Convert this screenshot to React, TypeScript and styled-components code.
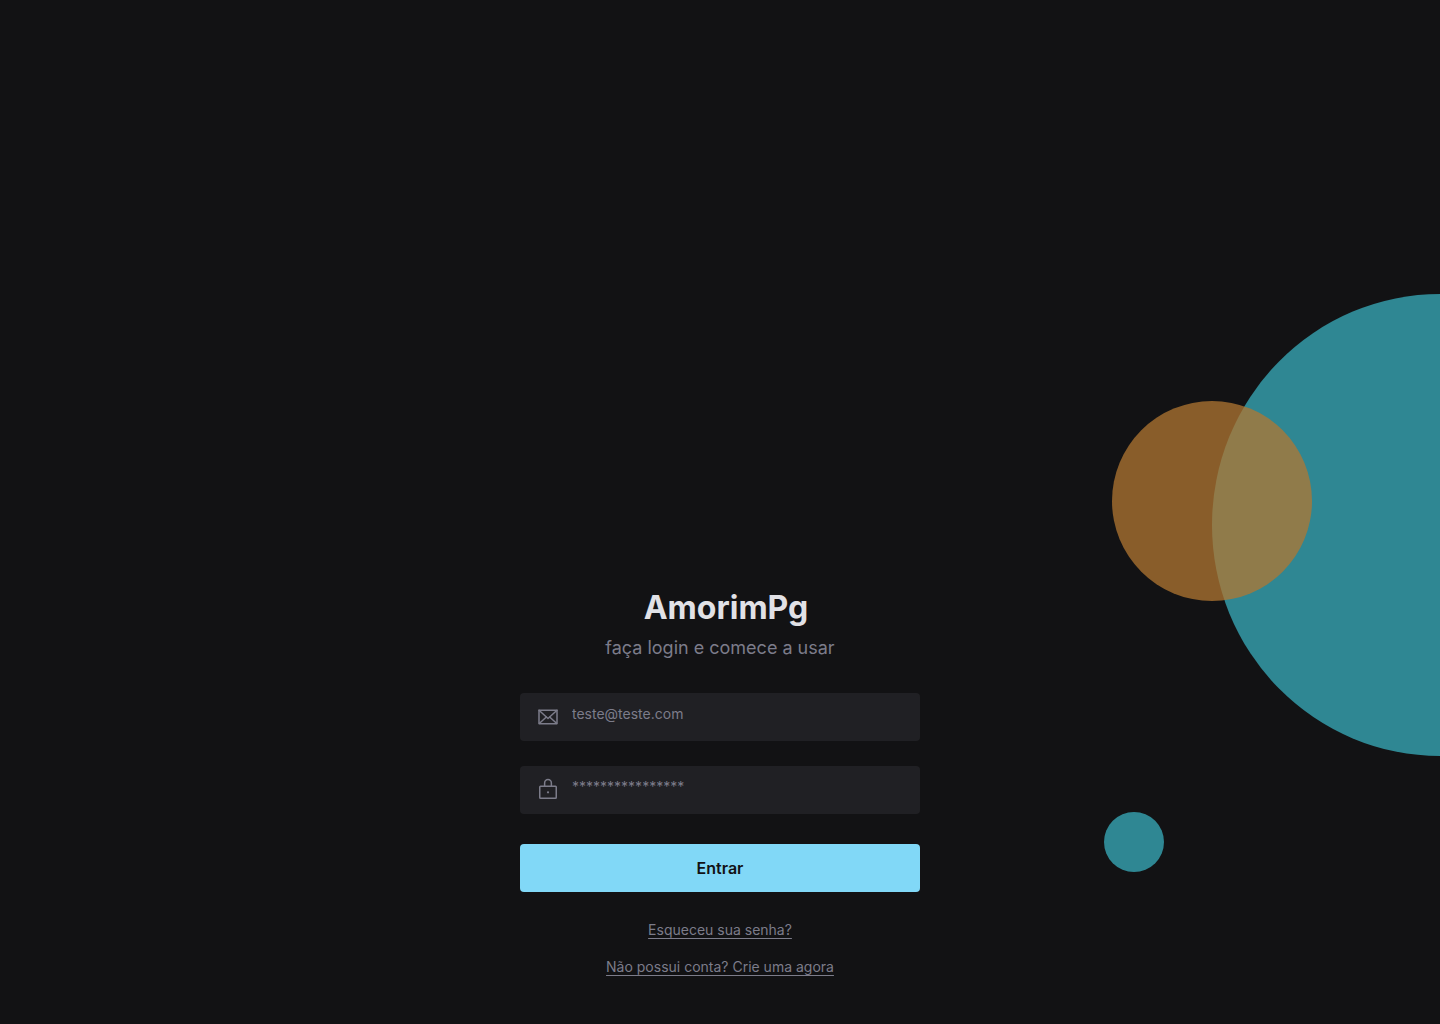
import React from "react";
import styled, { createGlobalStyle } from "styled-components";

const colors = {
  background: "#121214",
  field: "#202024",
  muted: "#7c7c8a",
  heading: "#e1e1e6",
  accent: "#81d8f7",
  teal: "#2f8793",
  orange: "rgba(177, 119, 49, 0.75)",
};

const GlobalStyle = createGlobalStyle`
  * {
    box-sizing: border-box;
    margin: 0;
  }

  body {
    background: ${colors.background};
    color: ${colors.muted};
    font-family: Inter, "Liberation Sans", sans-serif;
    -webkit-font-smoothing: antialiased;
  }
`;

const Page = styled.main`
  position: relative;
  display: flex;
  flex-direction: column;
  align-items: center;
  justify-content: flex-end;
  min-height: 100vh;
  padding: 40px 16px 47px;
  overflow: hidden;
`;

const Backdrop = styled.div`
  position: absolute;
  inset: 0;
  pointer-events: none;
`;

const Bubble = styled.span<{
  $width: number;
  $height: number;
  $top: number;
  $right: number;
  $color: string;
}>`
  position: absolute;
  top: ${(p) => p.$top}px;
  right: ${(p) => p.$right}px;
  width: ${(p) => p.$width}px;
  height: ${(p) => p.$height}px;
  border-radius: 50%;
  background: ${(p) => p.$color};
`;

const Panel = styled.div`
  position: relative;
  display: flex;
  flex-direction: column;
  width: 100%;
  max-width: 400px;
`;

const Header = styled.header`
  display: flex;
  flex-direction: column;
  align-items: center;
  margin-bottom: 31px;
  text-align: center;
`;

const Title = styled.h1`
  padding-left: 12px;
  color: ${colors.heading};
  font-size: 32px;
  font-weight: 700;
  line-height: 40px;
`;

const Subtitle = styled.p`
  margin-top: 6px;
  font-size: 18px;
  line-height: 28px;
`;

const Form = styled.form`
  display: flex;
  flex-direction: column;
`;

const Fields = styled.div`
  display: flex;
  flex-direction: column;
  gap: 25px;
  margin-bottom: 30px;
`;

const Field = styled.label`
  display: flex;
  align-items: center;
  gap: 12px;
  height: 48px;
  padding: 0 16px;
  border-radius: 4px;
  background: ${colors.field};
`;

const Icon = styled.svg`
  flex: none;
  width: 24px;
  height: 24px;
  fill: none;
  stroke: ${colors.muted};
  stroke-width: 16;
  stroke-linecap: round;
  stroke-linejoin: round;
`;

const Input = styled.input`
  flex: 1;
  min-width: 0;
  height: 100%;
  padding: 0 0 7px;
  border: 0;
  outline: 0;
  background: transparent;
  color: ${colors.heading};
  font: inherit;
  font-size: 14px;

  &::placeholder {
    color: ${colors.muted};
    opacity: 1;
  }
`;

const Button = styled.button`
  height: 48px;
  border: 0;
  border-radius: 4px;
  background: ${colors.accent};
  color: ${colors.background};
  font: inherit;
  font-size: 16px;
  font-weight: 600;
  cursor: pointer;
`;

const Links = styled.nav`
  display: flex;
  flex-direction: column;
  align-items: center;
  gap: 17px;
  margin-top: 28px;
`;

const TextLink = styled.a`
  color: inherit;
  font-size: 14px;
  line-height: 20px;
  text-decoration: underline;
  text-decoration-thickness: 1px;
  text-decoration-skip-ink: none;
  text-underline-offset: 3px;
`;

function EnvelopeIcon() {
  return (
    <Icon viewBox="0 0 256 256" aria-hidden="true">
      <path d="M32 56H224V192a8 8 0 0 1-8 8H40a8 8 0 0 1-8-8Z" />
      <path d="M224 56 128 144 32 56" />
      <path d="M110.5 128 34.5 197.7M221.5 197.7 145.5 128" />
    </Icon>
  );
}

function LockIcon() {
  return (
    <Icon viewBox="0 0 256 256" aria-hidden="true">
      <rect x="40" y="88" width="176" height="128" rx="8" />
      <path d="M92 88V52a36 36 0 0 1 72 0V88" />
      <circle cx="128" cy="152" r="12" fill={colors.muted} stroke="none" />
    </Icon>
  );
}

export default function App() {
  return (
    <>
      <GlobalStyle />
      <Page>
        <Backdrop aria-hidden="true">
          <Bubble $width={456} $height={462} $top={294} $right={-228} $color={colors.teal} />
          <Bubble $width={200} $height={200} $top={401} $right={128} $color={colors.orange} />
          <Bubble $width={60} $height={60} $top={812} $right={276} $color={colors.teal} />
        </Backdrop>
        <Panel>
          <Header>
            <Title>AmorimPg</Title>
            <Subtitle>faça login e comece a usar</Subtitle>
          </Header>
          <Form onSubmit={(event) => event.preventDefault()}>
            <Fields>
              <Field>
                <EnvelopeIcon />
                <Input type="email" name="email" aria-label="E-mail" placeholder="teste@teste.com" />
              </Field>
              <Field>
                <LockIcon />
                <Input type="password" name="password" aria-label="Senha" placeholder="****************" />
              </Field>
            </Fields>
            <Button type="submit">Entrar</Button>
          </Form>
          <Links>
            <TextLink href="#senha">Esqueceu sua senha?</TextLink>
            <TextLink href="#conta">Não possui conta? Crie uma agora</TextLink>
          </Links>
        </Panel>
      </Page>
    </>
  );
}
